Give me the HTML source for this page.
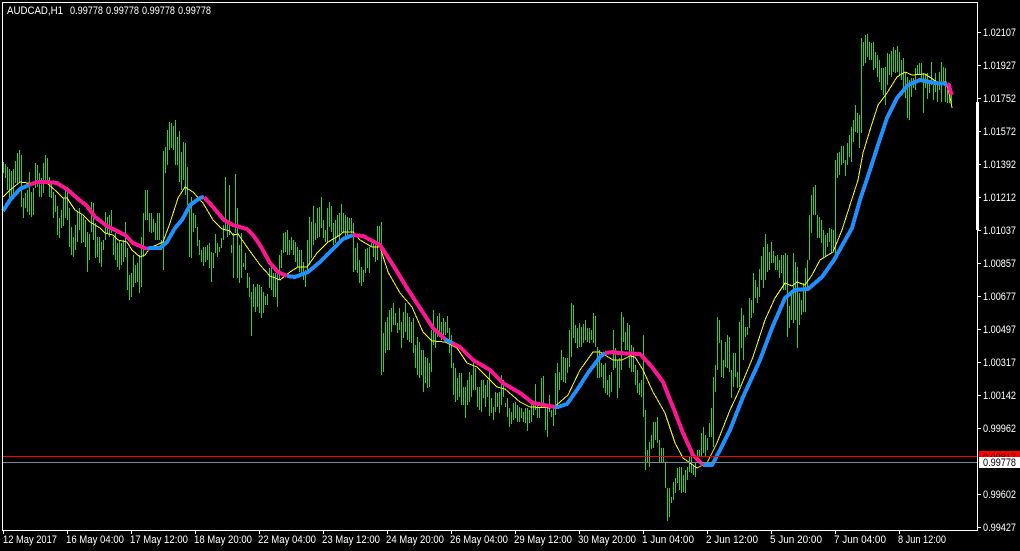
<!DOCTYPE html>
<html><head><meta charset="utf-8"><title>AUDCAD,H1</title>
<style>html,body{margin:0;padding:0;background:#000;width:1020px;height:551px;overflow:hidden}svg{display:block}text{font-family:"Liberation Sans",sans-serif;font-size:11px;fill:#fff}</style></head>
<body>
<svg width="1020" height="551" viewBox="0 0 1020 551" xmlns="http://www.w3.org/2000/svg">
<rect width="1020" height="551" fill="#000"/>
<path shape-rendering="crispEdges" fill="none" stroke="#32cd32" stroke-width="1" d="M3.5 162V173M5.5 164V178M7.5 167V190M9.5 169V203M11.5 171V198M13.5 169V195M15.5 161V183M17.5 153V183M19.5 150V182M21.5 155V207M23.5 198V218M25.5 193V208M27.5 190V212M29.5 172V215M31.5 192V217M33.5 188V215M35.5 163V188M37.5 165V187M39.5 173V197M41.5 178V197M43.5 163V193M45.5 155V183M47.5 158V182M49.5 177V197M51.5 183V198M53.5 192V218M55.5 195V212M57.5 206V235M59.5 218V238M61.5 210V228M63.5 198V226M65.5 187V218M67.5 187V220M69.5 208V247M71.5 227V255M73.5 237V257M75.5 225V250M77.5 212V242M79.5 208V230M81.5 215V243M83.5 217V242M85.5 220V247M87.5 232V272M89.5 234V260M91.5 202V232M93.5 203V240M95.5 223V258M97.5 237V257M99.5 237V263M101.5 242V267M103.5 240V250M105.5 212V240M107.5 217V233M109.5 215V237M111.5 210V233M113.5 237V255M115.5 233V260M117.5 243V267M119.5 240V270M121.5 243V265M123.5 240V262M125.5 222V257M127.5 248V290M129.5 275V300M131.5 273V297M133.5 255V287M135.5 265V283M137.5 263V282M139.5 255V293M141.5 237V287M143.5 213V257M145.5 190V220M147.5 190V220M149.5 213V232M151.5 213V233M153.5 219V232M155.5 223V240M157.5 213V240M159.5 213V240M161.5 240V250M163.5 151V270M165.5 147V173M167.5 130V165M169.5 122V150M171.5 123V148M173.5 126V150M175.5 120V165M177.5 137V165M179.5 131V182M181.5 152V190M183.5 142V180M185.5 143V195M187.5 167V205M189.5 208V257M191.5 197V258M193.5 213V232M195.5 215V228M197.5 227V246M199.5 240V255M201.5 250V262M203.5 247V266M205.5 247V262M207.5 245V260M209.5 243V268M211.5 252V282M213.5 253V268M215.5 234V253M217.5 243V257M219.5 247V252M221.5 238V248M223.5 225V240M225.5 177V230M227.5 223V237M229.5 185V235M231.5 245V253M233.5 233V278M235.5 174V233M237.5 208V278M239.5 245V283M241.5 233V278M243.5 263V267M245.5 253V270M247.5 273V288M249.5 277V297M251.5 292V336M253.5 284V307M255.5 287V312M257.5 284V307M259.5 285V313M261.5 287V318M263.5 292V313M265.5 296V305M267.5 294V305M269.5 268V288M271.5 267V290M273.5 273V297M275.5 273V297M277.5 273V307M279.5 255V280M281.5 250V268M283.5 233V253M285.5 232V252M287.5 230V255M289.5 240V255M291.5 237V250M293.5 240V255M295.5 242V262M297.5 247V267M299.5 250V272M301.5 250V273M303.5 262V280M305.5 270V287M307.5 240V270M309.5 217V265M311.5 222V258M313.5 206V245M315.5 223V240M317.5 208V238M319.5 207V237M321.5 197V228M323.5 220V238M325.5 230V242M327.5 208V243M329.5 202V227M331.5 206V232M333.5 223V245M335.5 220V243M337.5 215V237M339.5 213V240M341.5 204V232M343.5 213V233M345.5 215V237M347.5 217V237M349.5 218V230M351.5 218V233M353.5 223V272M355.5 248V270M357.5 243V273M359.5 260V283M361.5 267V286M363.5 270V282M365.5 249V273M367.5 248V268M369.5 247V273M371.5 243V247M373.5 240V257M375.5 245V262M377.5 226V260M379.5 226V245M381.5 222V375M383.5 333V372M385.5 322V353M387.5 317V350M389.5 310V350M391.5 308V332M393.5 303V325M395.5 313V325M397.5 323V333M399.5 308V330M401.5 322V348M403.5 312V338M405.5 303V332M407.5 313V340M409.5 317V342M411.5 322V343M413.5 318V353M415.5 345V368M417.5 337V375M419.5 342V378M421.5 350V375M423.5 350V392M425.5 357V383M427.5 358V388M429.5 363V387M431.5 330V372M433.5 310V345M435.5 330V348M437.5 316V337M439.5 313V337M441.5 322V340M443.5 318V335M445.5 322V335M447.5 316V333M449.5 328V353M451.5 335V368M453.5 363V395M455.5 368V402M457.5 378V400M459.5 373V397M461.5 373V405M463.5 387V405M465.5 387V418M467.5 380V405M469.5 372V402M471.5 375V397M473.5 360V390M475.5 368V390M477.5 387V407M479.5 387V410M481.5 380V412M483.5 380V398M485.5 385V407M487.5 380V397M489.5 370V416M491.5 398V413M493.5 407V420M495.5 392V412M497.5 393V407M499.5 392V413M501.5 375V405M503.5 380V397M505.5 403V407M507.5 398V417M509.5 408V427M511.5 412V424M513.5 403V420M515.5 402V418M517.5 405V422M519.5 407V422M521.5 408V418M523.5 412V422M525.5 408V423M527.5 408V431M529.5 410V423M531.5 403V422M533.5 402V415M535.5 384V410M537.5 402V418M539.5 407V418M541.5 378V407M543.5 376V403M545.5 407V430M547.5 407V437M549.5 395V412M551.5 410V417M553.5 407V426M555.5 373V415M557.5 363V405M559.5 372V390M561.5 350V380M563.5 357V382M565.5 358V383M567.5 358V373M569.5 330V367M571.5 303V357M573.5 305V338M575.5 325V343M577.5 328V348M579.5 323V347M581.5 327V347M583.5 324V343M585.5 320V340M587.5 328V342M589.5 328V343M591.5 330V340M593.5 313V343M595.5 316V347M597.5 347V378M599.5 350V378M601.5 363V377M603.5 365V388M605.5 363V393M607.5 380V395M609.5 375V397M611.5 372V392M613.5 330V370M615.5 348V368M617.5 360V398M619.5 358V388M621.5 312V370M623.5 317V342M625.5 332V350M627.5 323V350M629.5 325V368M631.5 345V372M633.5 347V372M635.5 365V385M637.5 370V393M639.5 383V395M641.5 380V397M643.5 335V417M645.5 410V470M647.5 450V463M649.5 442V467M651.5 435V449M653.5 422V448M655.5 422V440M657.5 417V443M659.5 440V462M661.5 448V463M663.5 448V463M665.5 463V488M667.5 488V521M669.5 488V517M671.5 497V503M673.5 482V500M675.5 478V493M677.5 468V483M679.5 467V490M681.5 467V493M683.5 475V492M685.5 470V493M687.5 467V480M689.5 457V472M691.5 455V473M693.5 465V475M695.5 463V477M697.5 450V460M699.5 450V457M701.5 433V457M703.5 427V453M705.5 435V457M707.5 438V450M709.5 423V437M711.5 408V437M713.5 377V447M715.5 365V392M717.5 317V370M719.5 320V343M721.5 340V377M723.5 360V378M725.5 342V367M727.5 335V368M729.5 337V372M731.5 370V398M733.5 353V387M735.5 353V377M737.5 372V388M739.5 322V387M741.5 308V348M743.5 315V360M745.5 327V337M747.5 327V335M749.5 298V328M751.5 300V318M753.5 273V313M755.5 280V298M757.5 287V303M759.5 269V297M761.5 256V280M763.5 247V288M765.5 234V280M767.5 244V272M769.5 252V270M771.5 242V263M773.5 251V263M775.5 256V270M777.5 255V270M779.5 260V278M781.5 255V273M783.5 255V290M785.5 253V290M787.5 255V337M789.5 306V328M791.5 290V320M793.5 253V323M795.5 262V320M797.5 267V348M799.5 293V325M801.5 300V315M803.5 283V312M805.5 268V312M807.5 260V287M809.5 215V260M811.5 195V233M813.5 187V215M815.5 185V215M817.5 215V238M819.5 217V238M821.5 220V243M823.5 230V257M825.5 235V257M827.5 233V247M829.5 228V242M831.5 229V253M833.5 230V250M835.5 160V260M837.5 153V178M839.5 152V175M841.5 146V165M843.5 146V163M845.5 160V176M847.5 143V165M849.5 135V157M851.5 127V162M853.5 120V142M855.5 105V132M857.5 113V133M859.5 115V148M861.5 38V133M863.5 42V66M865.5 35V63M867.5 34V57M869.5 42V60M871.5 43V60M873.5 42V70M875.5 52V68M877.5 55V77M879.5 60V82M881.5 68V90M883.5 68V95M885.5 67V105M887.5 53V85M889.5 54V75M891.5 51V77M893.5 47V72M895.5 50V73M897.5 46V72M899.5 52V75M901.5 60V80M903.5 58V90M905.5 72V98M907.5 77V118M909.5 80V120M911.5 78V97M913.5 78V88M915.5 68V90M917.5 65V75M919.5 63V75M921.5 63V82M923.5 73V113M925.5 75V88M927.5 73V99M929.5 82V93M931.5 62V85M933.5 85V100M935.5 73V92M937.5 83V102M939.5 72V90M941.5 62V102M943.5 67V83M945.5 68V102M947.5 90V103M949.5 83V103M951.5 90V106"/>
<path shape-rendering="crispEdges" fill="none" stroke="#ff0" stroke-width="1" d="M3 197L10 190L20 182L28 183L33 184L47 183L57 192L63 198L67 198L75 210L83 215L90 222L100 228L105 233L113 235L118 240L127 242L132 250L140 257L145 255L150 248L163 242L170 223L178 198L185 187L193 192L203 203L213 220L222 229L230 231L233 235L238 234L247 247L260 265L270 276L280 280L290 272L298 267L307 267L317 253L328 242L340 235L343 232L353 232L360 240L372 247L380 247L388 272L400 293L412 307L423 332L432 341L445 342L457 348L467 363L477 367L490 380L497 387L505 389L520 402L530 407L553 408L560 402L568 395L580 370L593 352L600 352L613 360L622 360L630 356L635 357L643 370L653 392L665 413L675 443L683 458L697 468L707 463L717 443L730 410L738 393L753 357L765 320L775 298L785 283L792 286L797 282L805 285L812 275L820 260L833 252L842 230L858 180L863 153L870 130L878 105L887 93L897 77L905 72L912 75L925 74L937 82L946 82L950 97L952 108"/>
<g shape-rendering="crispEdges" fill="none" stroke-width="4" stroke-linejoin="round">
<path stroke="#1e90ff" d="M3 211L10 200L20 189L29 185M147 249L150 248L160 248L167 242L175 228L182 220L190 205L200 198L204 197M287 276L295 277L308 272L320 262L332 250L343 239L353 235M445 339L448 341L452 343M553 407L558 407L567 404L577 390L588 373L600 357L605 353M703 465L712 465L720 450L730 430L743 397L760 360L772 328L785 298L795 290L808 289L822 277L834 260L852 228L860 200L870 170L878 145L887 118L897 98L908 85L920 80L935 83L947 84"/>
<path stroke="#ff1493" d="M29 185L37 182L47 182L57 183L68 190L77 198L87 206L95 217L107 226L117 231L125 235L133 243L147 249M204 197L213 207L224 220L233 225L247 229L253 235L260 245L270 263L278 272L287 276M353 235L363 236L380 245L393 265L407 288L420 308L433 328L445 339M452 343L460 347L473 360L490 370L503 383L520 393L533 403L555 407M605 353L613 352L618 353L640 354L652 367L663 382L673 407L683 433L693 455L703 465M947 84L949 85L951 93L952 95"/>
</g>
<g shape-rendering="crispEdges">
<rect x="3" y="456" width="974" height="1" fill="#f00"/>
<rect x="3" y="462" width="974" height="1" fill="#778899"/>
<rect x="2" y="2" width="976" height="1" fill="#fff"/>
<rect x="2" y="2" width="1" height="529" fill="#fff"/>
<rect x="2" y="530" width="976" height="1" fill="#fff"/>
<rect x="977" y="2" width="1" height="529" fill="#fff"/>
<rect x="976" y="102" width="3" height="128" fill="#fff"/>
<path stroke="#fff" stroke-width="1" fill="none" d="M978 32.5H981M978 65.5H981M978 98.5H981M978 131.5H981M978 164.5H981M978 197.5H981M978 230.5H981M978 263.5H981M978 296.5H981M978 329.5H981M978 362.5H981M978 395.5H981M978 428.5H981M978 494.5H981M978 527.5H981M3.5 531V534M67.5 531V534M131.5 531V534M195.5 531V534M259.5 531V534M323.5 531V534M387.5 531V534M451.5 531V534M515.5 531V534M579.5 531V534M643.5 531V534M707.5 531V534M771.5 531V534M835.5 531V534M899.5 531V534"/>
<rect x="979" y="451" width="41" height="6" fill="#f00"/>
</g>
<text x="983" y="461" textLength="33" lengthAdjust="spacingAndGlyphs" style="fill:#300">0.99817</text>
<rect x="979" y="457" width="41" height="11" fill="#fff" shape-rendering="crispEdges"/>
<text x="983" y="466" textLength="33" lengthAdjust="spacingAndGlyphs" style="fill:#000">0.99778</text>
<g>
<text x="7" y="14" textLength="56" lengthAdjust="spacingAndGlyphs">AUDCAD,H1</text>
<text x="70" y="14" textLength="33" lengthAdjust="spacingAndGlyphs">0.99778</text>
<text x="106" y="14" textLength="33" lengthAdjust="spacingAndGlyphs">0.99778</text>
<text x="142" y="14" textLength="33" lengthAdjust="spacingAndGlyphs">0.99778</text>
<text x="178" y="14" textLength="33" lengthAdjust="spacingAndGlyphs">0.99778</text>
<text x="983" y="36" textLength="33" lengthAdjust="spacingAndGlyphs">1.02107</text>
<text x="983" y="69" textLength="33" lengthAdjust="spacingAndGlyphs">1.01927</text>
<text x="983" y="102" textLength="33" lengthAdjust="spacingAndGlyphs">1.01752</text>
<text x="983" y="135" textLength="33" lengthAdjust="spacingAndGlyphs">1.01572</text>
<text x="983" y="168" textLength="33" lengthAdjust="spacingAndGlyphs">1.01392</text>
<text x="983" y="201" textLength="33" lengthAdjust="spacingAndGlyphs">1.01212</text>
<text x="983" y="234" textLength="33" lengthAdjust="spacingAndGlyphs">1.01037</text>
<text x="983" y="267" textLength="33" lengthAdjust="spacingAndGlyphs">1.00857</text>
<text x="983" y="300" textLength="33" lengthAdjust="spacingAndGlyphs">1.00677</text>
<text x="983" y="333" textLength="33" lengthAdjust="spacingAndGlyphs">1.00497</text>
<text x="983" y="366" textLength="33" lengthAdjust="spacingAndGlyphs">1.00317</text>
<text x="983" y="399" textLength="33" lengthAdjust="spacingAndGlyphs">1.00142</text>
<text x="983" y="432" textLength="33" lengthAdjust="spacingAndGlyphs">0.99962</text>
<text x="983" y="498" textLength="33" lengthAdjust="spacingAndGlyphs">0.99602</text>
<text x="983" y="531" textLength="33" lengthAdjust="spacingAndGlyphs">0.99427</text>
<text x="3" y="543" textLength="54" lengthAdjust="spacingAndGlyphs">12 May 2017</text>
<text x="66" y="543" textLength="58" lengthAdjust="spacingAndGlyphs">16 May 04:00</text>
<text x="130" y="543" textLength="58" lengthAdjust="spacingAndGlyphs">17 May 12:00</text>
<text x="194" y="543" textLength="58" lengthAdjust="spacingAndGlyphs">18 May 20:00</text>
<text x="258" y="543" textLength="58" lengthAdjust="spacingAndGlyphs">22 May 04:00</text>
<text x="322" y="543" textLength="58" lengthAdjust="spacingAndGlyphs">23 May 12:00</text>
<text x="386" y="543" textLength="58" lengthAdjust="spacingAndGlyphs">24 May 20:00</text>
<text x="450" y="543" textLength="58" lengthAdjust="spacingAndGlyphs">26 May 04:00</text>
<text x="514" y="543" textLength="58" lengthAdjust="spacingAndGlyphs">29 May 12:00</text>
<text x="578" y="543" textLength="58" lengthAdjust="spacingAndGlyphs">30 May 20:00</text>
<text x="642" y="543" textLength="52" lengthAdjust="spacingAndGlyphs">1 Jun 04:00</text>
<text x="706" y="543" textLength="52" lengthAdjust="spacingAndGlyphs">2 Jun 12:00</text>
<text x="770" y="543" textLength="52" lengthAdjust="spacingAndGlyphs">5 Jun 20:00</text>
<text x="834" y="543" textLength="52" lengthAdjust="spacingAndGlyphs">7 Jun 04:00</text>
<text x="898" y="543" textLength="48" lengthAdjust="spacingAndGlyphs">8 Jun 12:00</text>
</g>
</svg>
</body></html>
